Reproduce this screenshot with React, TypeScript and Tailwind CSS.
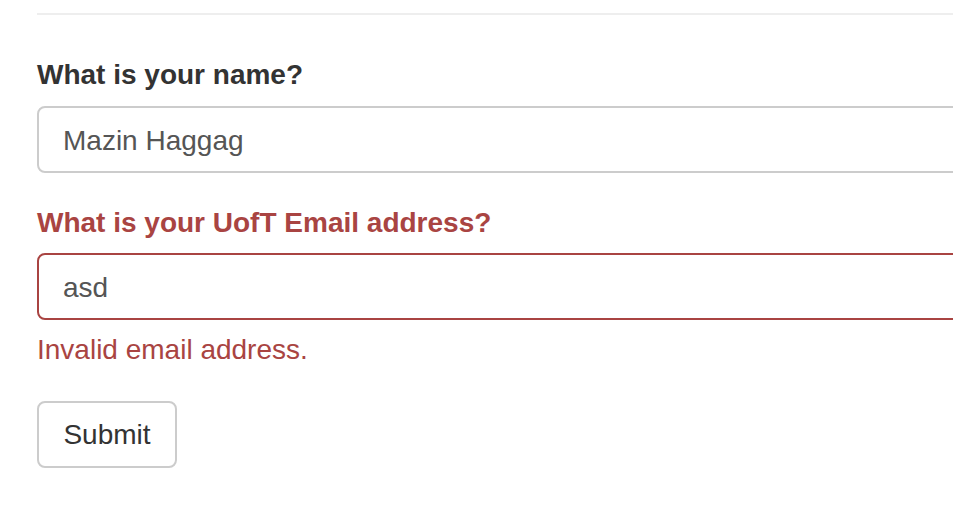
import React from 'react';

export default function App() {
  return (
    <div
      className="w-[953px] h-[511px] overflow-hidden bg-white pl-[37px]"
      style={{ fontFamily: '"Liberation Sans", Arial, sans-serif' }}
    >
      {/* Divider */}
      <div className="mt-[13px] h-[2px] w-[940px] bg-[#eeeeee]" />

      <form className="mt-[40px] flex flex-col items-start" onSubmit={(e) => e.preventDefault()}>
        {/* Name */}
        <label className="block text-[28px] leading-[40px] font-bold text-[#333333]">
          What is your name?
        </label>
        <input
          type="text"
          defaultValue="Mazin Haggag"
          className="mt-[11px] h-[67px] w-[940px] rounded-[8px] border-2 border-[#cccccc] bg-white px-[24px] pt-[2px] text-[28px] text-[#555555] outline-none"
        />

        {/* Email (error state) */}
        <label className="mt-[30px] block text-[28px] leading-[40px] font-bold text-[#a94442]">
          What is your UofT Email address?
        </label>
        <input
          type="text"
          defaultValue="asd"
          className="mt-[10px] h-[67px] w-[940px] rounded-[8px] border-2 border-[#a94442] bg-white px-[24px] pt-[2px] text-[28px] text-[#555555] outline-none"
        />
        <p className="mt-[10px] text-[28px] leading-[40px] text-[#a94442]">Invalid email address.</p>

        <button
          type="submit"
          className="mt-[31px] h-[67px] w-[140px] rounded-[8px] border-2 border-[#cccccc] bg-white text-[28px] text-[#333333]"
        >
          Submit
        </button>
      </form>
    </div>
  );
}
